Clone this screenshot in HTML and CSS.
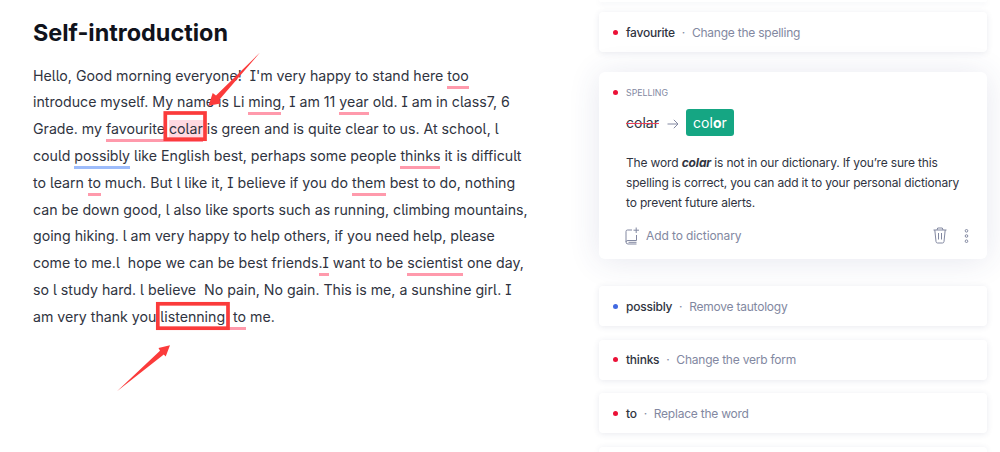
FILE: index.html
```
<!DOCTYPE html>
<html lang="en">
<head>
  <meta charset="UTF-8" />
  <meta name="viewport" content="width=device-width, initial-scale=1.0"/>
  <title>Self-introduction</title>
  <link rel="stylesheet" href="styles.css">
</head>
<body>

  <!-- Document -->
  <main class="editor">
    <h1>Self-introduction</h1>
    <div class="text">
      <p>Hello, Good morning everyone!  I'm very happy to stand here <u>too</u></p>
      <p>introduce myself. My name is Li <u>ming</u>, I am 11 <u>year</u> old. I am in class7, 6</p>
      <p>Grade. my <u>favourite </u><u class="active">colar</u> is green and is quite clear to us. At school, l</p>
      <p>could <u class="clarity">possibly</u> like English best, perhaps some people <u>thinks</u> it is difficult</p>
      <p>to learn <u>to</u> much. But l like it, I believe if you do <u>them</u> best to do, nothing</p>
      <p>can be down good, l also like sports such as running, climbing mountains,</p>
      <p>going hiking. l am very happy to help others, if you need help, please</p>
      <p>come to me.l  hope we can be best friends<u>.I</u> want to be <u>scientist</u> one day,</p>
      <p>so l study hard. l believe  No pain, No gain. This is me, a sunshine girl. I</p>
      <p>am very thank you <u>listenning</u><u>  to</u> me.</p>
    </div>
    <svg class="marks" width="560" height="400" viewBox="0 0 560 400">
      <rect x="165.300" y="113" width="39.700" height="26.200"/>
      <rect x="157.800" y="303.800" width="70.200" height="24.400"/>
      <path d="M260 52.500L219.500 99.500L220.500 103.500L208.500 105.800L212.700 93L216 95.500Z"/>
      <path d="M117 391.300L160 350.700L158.500 348L170 345.300L165.700 356.500L163.800 354.500Z"/>
    </svg>
  </main>

  <!-- Suggestions -->
  <aside class="sidebar">
    <div class="card"></div>
    <div class="card"><i class="dot"></i><b>favourite</b><span class="sep">·</span><span>Change the spelling</span></div>

    <div class="card-open">
      <div class="label"><i class="dot"></i>SPELLING</div>
      <div class="fix">
        <s>colar</s>
        <svg width="12" height="12" viewBox="0 0 12 12"><path d="M0.500 6H11M6.800 1.800L11 6L6.800 10.200"/></svg>
        <button>col<b>o</b>r</button>
      </div>
      <div class="note">
        <p>The word <b>colar</b> is not in our dictionary. If you’re sure this</p>
        <p>spelling is correct, you can add it to your personal dictionary</p>
        <p>to prevent future alerts.</p>
      </div>
      <div class="actions">
        <svg width="15" height="18" viewBox="0 0 15 18"><path d="M7 3H2.500Q1 3 1 4.500V15Q1 17 3 17H11.500M11.500 8V13.500H3Q1 13.500 1 15M3.500 15.300H11.500M11.200 0.500V6M8.500 3.200H14"/></svg>
        <span>Add to dictionary</span>
        <svg class="trash" width="14" height="17" viewBox="0 0 14 17"><path d="M0.500 3H13.500M4 3L4.700 1H9.300L10 3M1.800 3L3 14.500Q3.200 16 4.500 16H9.500Q10.800 16 11 14.500L12.200 3M5.500 6V12.500M8.500 6V12.500"/></svg>
        <svg class="more" width="5" height="16" viewBox="0 0 5 16"><circle cx="2.500" cy="2.800" r="1.300"/><circle cx="2.500" cy="8" r="1.300"/><circle cx="2.500" cy="13.200" r="1.300"/></svg>
      </div>
    </div>

    <div class="card"><i class="dot blue"></i><b>possibly</b><span class="sep">·</span><span>Remove tautology</span></div>
    <div class="card"><i class="dot"></i><b>thinks</b><span class="sep">·</span><span>Change the verb form</span></div>
    <div class="card"><i class="dot"></i><b>to</b><span class="sep">·</span><span>Replace the word</span></div>
    <div class="card"></div>
  </aside>

</body>
</html>
```
FILE: styles.css
```
:root {
  --red: #eb1137;
  --mark: #fb3b3b;
  --muted: #8288a1;
  --text: #30343f;
}

* {
  box-sizing: border-box;
  margin: 0;
  padding: 0;
}

body {
  font-family: Inter, "Liberation Sans", sans-serif;
  background: #fff;
  color: var(--text);
  height: 452px;
  display: flex;
  overflow: hidden;
}

.editor {
  position: relative;
  width: 599px;
  padding: 18px 0 0 33px;
}

h1 {
  font-size: 23.400px;
  line-height: 30px;
  font-weight: 700;
  color: #10131c;
}

.text {
  display: flex;
  flex-direction: column;
  margin-top: 14.700px;
  font-size: 14.200px;
  line-height: 26.800px;
  letter-spacing: -0.015px;
  white-space: pre;
  font-feature-settings: "cv05", "cv08";
}

.text p {
  height: 26.800px;
}

u {
  text-decoration: none;
  padding-bottom: 2px;
  border-bottom: 3px solid #ff9aac;
}

u.clarity {
  border-color: #9dbcfb;
}

u.active {
  background: #ffd9e1;
}

/* arrows and frames lie over the text */
.marks {
  position: absolute;
  left: 0;
  top: 0;
}

.marks rect {
  fill: none;
  stroke: var(--mark);
  stroke-width: 3.700;
}

.marks path {
  fill: var(--mark);
}

.sidebar {
  width: 388px;
  height: 452px;
  font-size: 12px;
  letter-spacing: -0.170px;
  flex-shrink: 0;
}

.card {
  height: 40px;
  margin-bottom: 13.500px;
  padding-left: 14px;
  display: flex;
  align-items: center;
  border-radius: 4px;
  background: #fff;
  box-shadow: 0 1px 6px rgba(40, 50, 100, 0.1);
  letter-spacing: -0.230px;
  color: var(--muted);
}

.card:first-child {
  height: 2px;
  margin-bottom: 10px;
  border-radius: 0 0 4px 4px;
}

.card:last-child {
  height: 5px;
  margin-bottom: 0;
  border-radius: 4px 4px 0 0;
}

.card b {
  font-weight: 500;
  color: var(--text);
}

.dot {
  width: 5px;
  height: 5px;
  margin-right: 8px;
  border-radius: 50%;
  background: var(--red);
}

.dot.blue {
  background: #4169e1;
}

.sep {
  width: 17px;
  text-align: center;
}

.card-open {
  height: 187px;
  margin: 20px 0 27px;
  padding: 13px 14px 0;
  border-radius: 6px;
  background: #fff;
  box-shadow: 0 2px 32px rgba(50, 60, 120, 0.12);
}

.label {
  height: 14px;
  display: flex;
  align-items: center;
  font-size: 8.800px;
  letter-spacing: 0;
  color: var(--muted);
}

.fix {
  height: 27px;
  margin: 10px 0 0 13px;
  display: flex;
  align-items: center;
  font-size: 14px;
  letter-spacing: 0;
}

.fix s {
  text-decoration-color: #e8405c;
}

.fix svg {
  margin: 2px 7px 0 8px;
}

.fix button {
  width: 48px;
  height: 27px;
  border: none;
  border-radius: 3px;
  background: #15a683;
  color: #fff;
  font: inherit;
}

.card-open svg {
  fill: none;
  stroke: var(--muted);
  stroke-width: 1;
}

.note {
  margin: 17px 0 0 13px;
  line-height: 20px;
  letter-spacing: -0.155px;
  white-space: nowrap;
}

.note b {
  font-style: italic;
}

.actions {
  height: 18px;
  margin: 13.500px 0 0 12px;
  display: flex;
  align-items: center;
  letter-spacing: -0.100px;
  color: var(--muted);
}

.actions span {
  margin-left: 6px;
}

.actions .trash {
  margin-left: auto;
}

.actions .more {
  margin: 0 4px 0 17px;
}
```
